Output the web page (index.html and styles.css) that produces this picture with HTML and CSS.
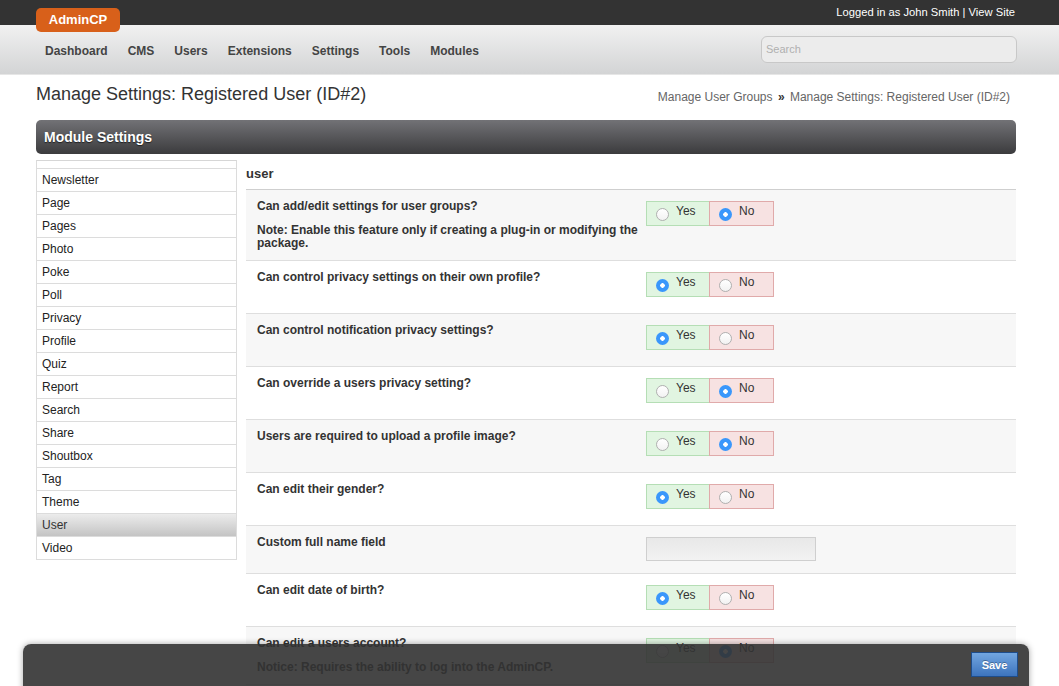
FILE: index.html
```html
<!DOCTYPE html>
<html>
<head>
<meta charset="utf-8">
<link rel="stylesheet" href="styles.css">
</head>
<body>
<div class="topbar">
  <div class="topbar-inner">
    <div class="badge">AdminCP</div>
    <div class="userinfo">Logged in as John Smith | View Site</div>
  </div>
</div>
<div class="nav">
  <div class="nav-inner">
    <ul class="menu">
      <li>Dashboard</li>
      <li>CMS</li>
      <li>Users</li>
      <li>Extensions</li>
      <li>Settings</li>
      <li>Tools</li>
      <li>Modules</li>
    </ul>
    <div class="search">Search</div>
  </div>
</div>
<div class="page">
  <div class="titlebar">
    <h1 class="title">Manage Settings: Registered User (ID#2)</h1>
    <div class="crumbs">Manage User Groups <b class="raquo">»</b> Manage Settings: Registered User (ID#2)</div>
  </div>
  <div class="panel-head">Module Settings</div>
  <div class="panel-body">
    <div class="sidebar">
      <ul class="modlist">
        <li>Mail</li>
        <li>Marketplace</li>
        <li>Music</li>
        <li>Newsletter</li>
        <li>Page</li>
        <li>Pages</li>
        <li>Photo</li>
        <li>Poke</li>
        <li>Poll</li>
        <li>Privacy</li>
        <li>Profile</li>
        <li>Quiz</li>
        <li>Report</li>
        <li>Search</li>
        <li>Share</li>
        <li>Shoutbox</li>
        <li>Tag</li>
        <li>Theme</li>
        <li class="active">User</li>
        <li>Video</li>
      </ul>
    </div>
    <div class="content">
      <div class="section-title">user</div>
      <div class="row alt">
        <div class="label">
          <div class="q">Can add/edit settings for user groups?</div>
          <div class="note">Note: Enable this feature only if creating a plug-in or modifying the package.</div>
        </div>
        <div class="field"><div class="yn"><span class="opt yes"><i class="radio"></i>Yes</span><span class="opt no"><i class="radio on"></i>No</span></div></div>
      </div>
      <div class="row">
        <div class="label"><div class="q">Can control privacy settings on their own profile?</div></div>
        <div class="field"><div class="yn"><span class="opt yes"><i class="radio on"></i>Yes</span><span class="opt no"><i class="radio"></i>No</span></div></div>
      </div>
      <div class="row alt">
        <div class="label"><div class="q">Can control notification privacy settings?</div></div>
        <div class="field"><div class="yn"><span class="opt yes"><i class="radio on"></i>Yes</span><span class="opt no"><i class="radio"></i>No</span></div></div>
      </div>
      <div class="row">
        <div class="label"><div class="q">Can override a users privacy setting?</div></div>
        <div class="field"><div class="yn"><span class="opt yes"><i class="radio"></i>Yes</span><span class="opt no"><i class="radio on"></i>No</span></div></div>
      </div>
      <div class="row alt">
        <div class="label"><div class="q">Users are required to upload a profile image?</div></div>
        <div class="field"><div class="yn"><span class="opt yes"><i class="radio"></i>Yes</span><span class="opt no"><i class="radio on"></i>No</span></div></div>
      </div>
      <div class="row">
        <div class="label"><div class="q">Can edit their gender?</div></div>
        <div class="field"><div class="yn"><span class="opt yes"><i class="radio on"></i>Yes</span><span class="opt no"><i class="radio"></i>No</span></div></div>
      </div>
      <div class="row alt">
        <div class="label"><div class="q">Custom full name field</div></div>
        <div class="field"><div class="textbox"></div></div>
      </div>
      <div class="row">
        <div class="label"><div class="q">Can edit date of birth?</div></div>
        <div class="field"><div class="yn"><span class="opt yes"><i class="radio on"></i>Yes</span><span class="opt no"><i class="radio"></i>No</span></div></div>
      </div>
      <div class="row alt">
        <div class="label">
          <div class="q">Can edit a users account?</div>
          <div class="note">Notice: Requires the ability to log into the AdminCP.</div>
        </div>
        <div class="field"><div class="yn"><span class="opt yes"><i class="radio"></i>Yes</span><span class="opt no"><i class="radio on"></i>No</span></div></div>
      </div>
    </div>
  </div>
</div>
<div class="savebar">
  <button class="save">Save</button>
</div>
</body>
</html>
```
FILE: styles.css
```css
html, body {
  margin: 0;
  padding: 0;
  background: #fff;
  font-family: "Liberation Sans", Arial, Helvetica, sans-serif;
  color: #333;
  overflow: hidden;
  height: 686px;
}
ul { list-style: none; margin: 0; padding: 0; }

.topbar {
  background: #333;
  height: 25px;
}
.topbar-inner {
  width: 980px;
  margin-left: 36px;
  display: flex;
  justify-content: space-between;
  align-items: flex-start;
}
.badge {
  position: relative;
  z-index: 2;
  margin-top: 8px;
  width: 84px;
  height: 24px;
  box-sizing: border-box;
  background: #d8601a;
  border-radius: 5px;
  color: #fff;
  font-weight: bold;
  font-size: 13px;
  line-height: 24px;
  text-align: center;
}
.userinfo {
  color: #fff;
  font-size: 11.2px;
  line-height: 25px;
  margin-right: 1px;
}

.nav {
  height: 49px;
  background: linear-gradient(#f1f1f1, #d3d4d5);
  border-bottom: 1px solid #e6e6e6;
}
.nav-inner {
  width: 980px;
  margin-left: 36px;
  display: flex;
  justify-content: space-between;
  align-items: flex-start;
}
.menu {
  display: flex;
  gap: 20px;
  padding-left: 9px;
  padding-top: 19px;
}
.menu li {
  font-size: 12px;
  font-weight: bold;
  color: #444;
  line-height: 15px;
}
.search {
  margin-top: 11px;
  width: 256px;
  height: 27px;
  box-sizing: border-box;
  border: 1px solid #c8c8c8;
  border-radius: 6px;
  background: #ececec;
  color: #b0b0b0;
  font-size: 11px;
  line-height: 25px;
  padding-left: 4px;
  margin-right: -1px;
}

.page {
  width: 980px;
  margin-left: 36px;
}
.titlebar {
  display: flex;
  justify-content: space-between;
  align-items: flex-start;
  height: 45px;
}
.title {
  margin: 8px 0 0 0;
  font-size: 18px;
  font-weight: normal;
  color: #333;
  line-height: 22px;
}
.crumbs {
  margin-top: 15px;
  font-size: 12px;
  line-height: 15px;
  color: #666;
  margin-right: 6px;
}
.raquo { color: #333; margin: 0 2px; }

.panel-head {
  height: 34px;
  border-radius: 5px;
  background: linear-gradient(#727276, #3b3b3d);
  color: #fff;
  font-weight: bold;
  font-size: 14px;
  line-height: 34px;
  padding-left: 8px;
  text-shadow: 0 1px 1px rgba(0,0,0,0.6);
}

.panel-body {
  display: flex;
  gap: 9px;
  align-items: flex-start;
}
.sidebar {
  margin-top: 6px;
  width: 201px;
  height: 400px;
  box-sizing: border-box;
  border: 1px solid #dcdcdc;
  border-top-color: #d6d6d6;
  overflow: hidden;
  display: flex;
  flex-direction: column;
  justify-content: flex-end;
  background: #fff;
}
.modlist li {
  height: 22px;
  line-height: 22px;
  border-bottom: 1px solid #dcdcdc;
  font-size: 12px;
  color: #222;
  padding-left: 5px;
  flex: none;
}
.modlist li:last-child { border-bottom: 0; }
.modlist li.active {
  background: linear-gradient(#ececec, #c4c4c4);
  color: #333;
}

.content {
  flex: 1;
}
.section-title {
  font-size: 13px;
  font-weight: bold;
  color: #333;
  line-height: 16px;
  padding: 12px 0 7px 0;
  border-bottom: 1px solid #cfcfcf;
}
.row {
  display: flex;
  padding: 9px 11px 10px 11px;
  border-bottom: 1px solid #dedede;
  background: #fff;
}
.row.alt { background: #f7f7f7; }
.label {
  width: 389px;
  font-size: 12px;
  font-weight: bold;
  color: #333;
}
.q { line-height: 15px; }
.note {
  margin-top: 10px;
  line-height: 13px;
}
.field { padding-top: 2px; }
.yn {
  display: flex;
  margin-bottom: 6px;
}
.opt {
  display: flex;
  align-items: flex-start;
  height: 25px;
  box-sizing: border-box;
  font-size: 12px;
  color: #333;
  line-height: 15px;
  padding: 2px 0 0 9px;
  gap: 7px;
}
.opt.yes {
  width: 64px;
  background: #e1f5e1;
  border: 1px solid #b5deb5;
}
.opt.no {
  width: 65px;
  margin-left: -1px;
  background: #f7e2e2;
  border: 1px solid #e0aaaa;
}
.radio {
  display: block;
  width: 13px;
  height: 13px;
  box-sizing: border-box;
  border-radius: 50%;
  border: 1px solid #b0b0b0;
  background: linear-gradient(#ffffff, #f2f2f2);
  margin-top: 4px;
  flex: none;
}
.radio.on {
  border: 0;
  background: radial-gradient(circle, #fff 0 2px, #3a97fb 2.5px);
}
.textbox {
  width: 170px;
  height: 24px;
  box-sizing: border-box;
  border: 1px solid #cfcfcf;
  background: linear-gradient(#e8e8e8, #f2f2f2);
  margin-bottom: 2px;
}

.savebar {
  position: fixed;
  left: 23px;
  top: 644px;
  width: 1006px;
  height: 60px;
  border-radius: 8px 8px 0 0;
  background: rgba(50, 50, 50, 0.9);
  box-shadow: 0 0 6px rgba(0,0,0,0.35);
  display: flex;
  justify-content: flex-end;
  align-items: flex-start;
  box-sizing: border-box;
  padding: 8px 11px 0 0;
}
.save {
  width: 47px;
  height: 25px;
  border: 1px solid #1e4d8c;
  background: linear-gradient(#72a6e0, #3d74be);
  color: #fff;
  font-family: "Liberation Sans", Arial, sans-serif;
  font-weight: bold;
  font-size: 11px;
  padding: 0;
  text-shadow: 0 -1px 0 rgba(0,0,0,0.3);
}
```
